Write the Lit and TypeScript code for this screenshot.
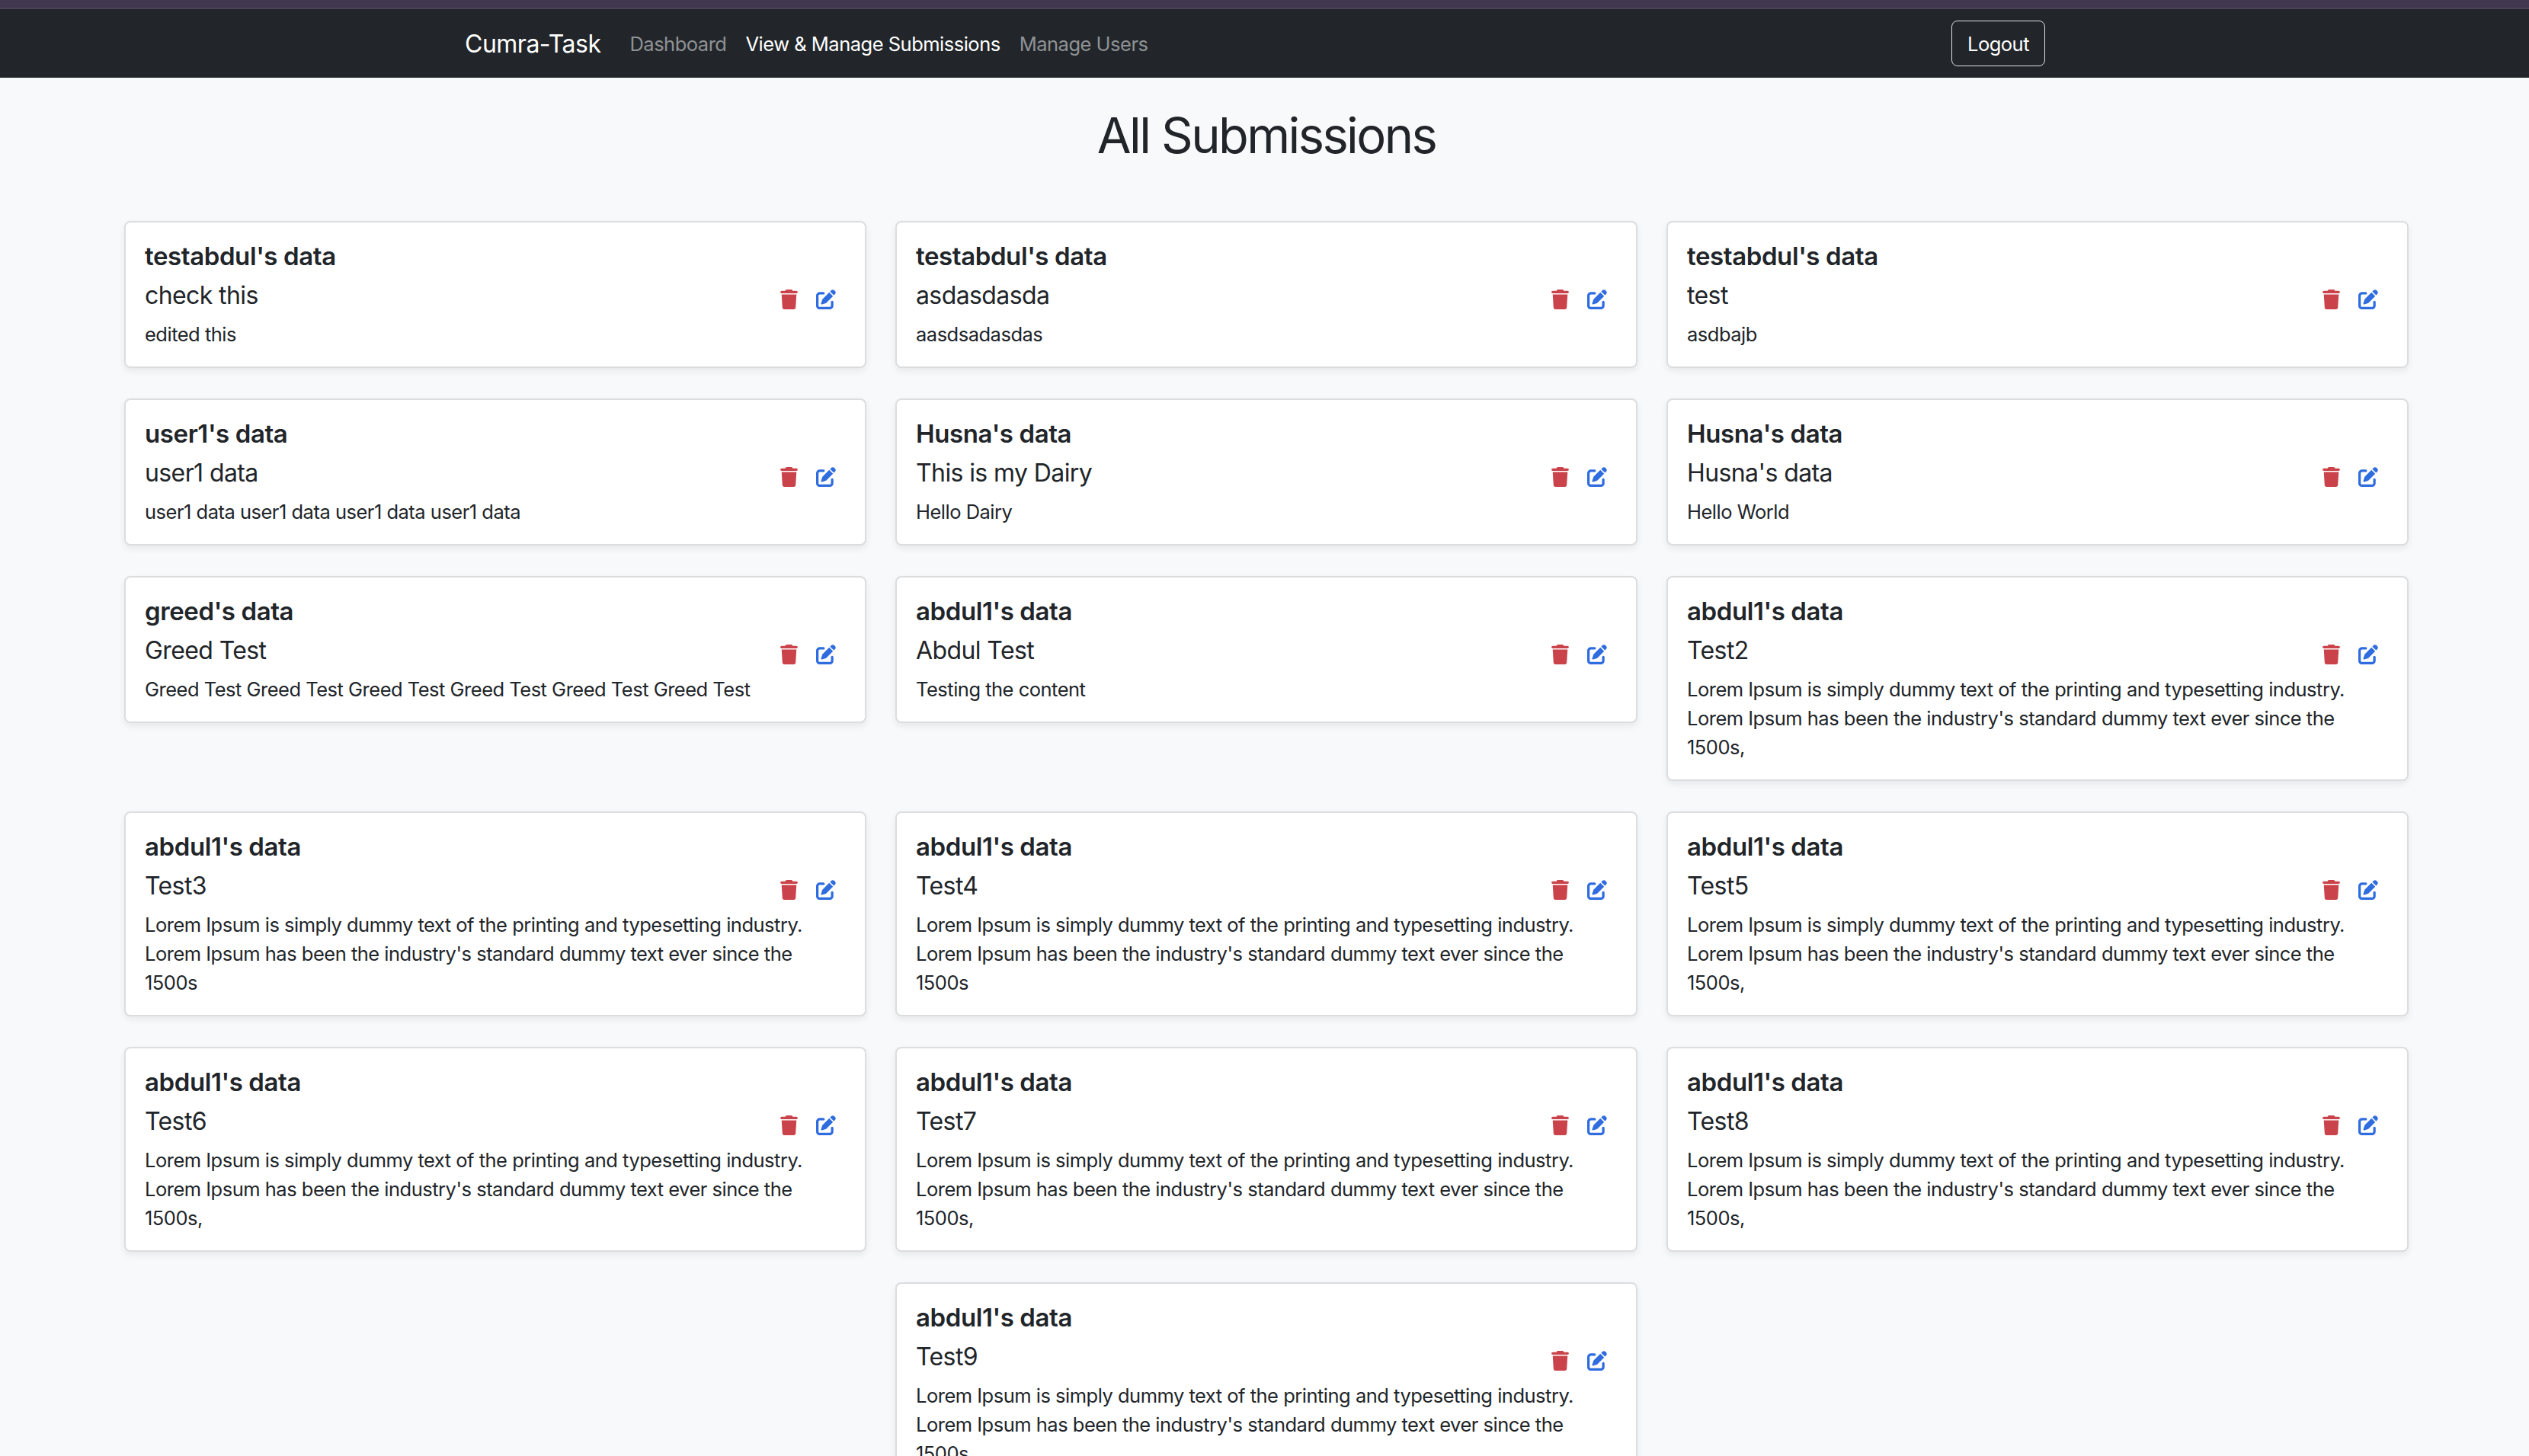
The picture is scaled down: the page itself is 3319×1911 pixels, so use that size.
import {LitElement, css, html} from 'lit'
import {customElement} from 'lit/decorators.js'

const lorem = "Lorem Ipsum is simply dummy text of the printing and typesetting industry. Lorem Ipsum has been the industry's standard dummy text ever since the 1500s"

const submissions = [
  {owner: 'testabdul', title: 'check this', text: 'edited this'},
  {owner: 'testabdul', title: 'asdasdasda', text: 'aasdsadasdas'},
  {owner: 'testabdul', title: 'test', text: 'asdbajb'},
  {owner: 'user1', title: 'user1 data', text: 'user1 data user1 data user1 data user1 data'},
  {owner: 'Husna', title: 'This is my Dairy', text: 'Hello Dairy'},
  {owner: 'Husna', title: "Husna's data", text: 'Hello World'},
  {owner: 'greed', title: 'Greed Test', text: 'Greed Test Greed Test Greed Test Greed Test Greed Test Greed Test'},
  {owner: 'abdul1', title: 'Abdul Test', text: 'Testing the content'},
  {owner: 'abdul1', title: 'Test2', text: lorem + ','},
  {owner: 'abdul1', title: 'Test3', text: lorem},
  {owner: 'abdul1', title: 'Test4', text: lorem},
  {owner: 'abdul1', title: 'Test5', text: lorem + ','},
  {owner: 'abdul1', title: 'Test6', text: lorem + ','},
  {owner: 'abdul1', title: 'Test7', text: lorem + ','},
  {owner: 'abdul1', title: 'Test8', text: lorem + ','},
  {owner: 'abdul1', title: 'Test9', text: lorem},
]

@customElement('app-root')
export class AppRoot extends LitElement {
  static styles = css`
    :host {
      display: block;
      height: 1911px;
      overflow: hidden;
      background: #f8f9fa;
      color: #212529;
      font-family: Inter, "Liberation Sans", sans-serif;
    }

    .strip {
      height: 10px;
      background: #41384f;
      border-bottom: 2px solid #4b4358;
    }

    .nav {
      display: flex;
      align-items: center;
      height: 90px;
      padding: 0 635px 0 610px;
      background: #22262a;
    }

    .brand {
      font-size: 32px;
      letter-spacing: -0.5px;
      color: #fff;
      margin-right: 38px;
    }

    .link {
      font-size: 25.5px;
      letter-spacing: -0.5px;
      color: #8f9295;
      margin-right: 25px;
    }

    .link.active {
      color: #fff;
    }

    .logout {
      margin-left: auto;
      width: 123px;
      height: 60px;
      box-sizing: border-box;
      border: 1.5px solid #e0e1e2;
      border-radius: 8px;
      background: none;
      color: #fff;
      font: inherit;
      font-size: 25.5px;
      letter-spacing: -0.5px;
      padding: 0;
    }

    h1 {
      margin: 0;
      padding: 36px 0 0 5px;
      height: 150px;
      box-sizing: border-box;
      text-align: center;
      font-size: 65px;
      line-height: 80px;
      letter-spacing: -2.6px;
      font-weight: 400;
    }

    .cards {
      display: flex;
      flex-wrap: wrap;
      justify-content: center;
      align-items: flex-start;
      gap: 40px 38px;
      padding: 38px 158px 0 163px;
    }

    .card {
      position: relative;
      box-sizing: border-box;
      width: 974px;
      padding: 24px 59px 23px 25px;
      background: #fff;
      border: 2px solid #dcdddf;
      border-radius: 8px;
      box-shadow: 0 4px 10px rgba(0, 0, 0, 0.07);
    }

    .owner {
      margin: 0;
      font-size: 33px;
      line-height: 40px;
      letter-spacing: -0.4px;
      font-weight: 600;
    }

    .title {
      margin: 12px 0 0;
      font-size: 32px;
      line-height: 40px;
      letter-spacing: -0.6px;
    }

    .text {
      margin: 12px 0 0;
      font-size: 25.5px;
      line-height: 38px;
      letter-spacing: -0.5px;
    }

    .actions {
      position: absolute;
      top: 88px;
      right: 38px;
      display: flex;
      gap: 24px;
    }

    .trash {
      width: 23px;
      height: 26px;
      fill: #cb434a;
    }

    .edit {
      width: 26px;
      height: 26px;
      fill: #2f6cdf;
    }
  `

  render() {
    return html`
      <div class="strip"></div>
      <nav class="nav">
        <span class="brand">Cumra-Task</span>
        <span class="link">Dashboard</span>
        <span class="link active">View &amp; Manage Submissions</span>
        <span class="link">Manage Users</span>
        <button class="logout">Logout</button>
      </nav>
      <h1>All Submissions</h1>
      <div class="cards">
        ${submissions.map(s => html`
          <div class="card">
            <p class="owner">${s.owner}'s data</p>
            <p class="title">${s.title}</p>
            <p class="text">${s.text}</p>
            <div class="actions">
              <svg class="trash" viewBox="0 0 448 512"><path d="M135.2 17.7L128 32H32C14.3 32 0 46.3 0 64S14.3 96 32 96H416c17.7 0 32-14.3 32-32s-14.3-32-32-32H320l-7.2-14.3C307.4 6.8 296.3 0 284.2 0H163.8c-12.1 0-23.2 6.8-28.6 17.7zM416 128H32L53.2 467c1.6 25.3 22.6 45 47.9 45H346.9c25.3 0 46.3-19.7 47.9-45L416 128z"/></svg>
              <svg class="edit" viewBox="0 0 512 512"><path d="M471.6 21.7c-21.9-21.9-57.3-21.9-79.2 0L362.3 51.7l97.9 97.9 30.1-30.1c21.9-21.9 21.9-57.3 0-79.2L471.6 21.7zm-299.2 220c-6.1 6.1-10.8 13.6-13.5 21.9l-29.6 88.8c-2.9 8.6-.6 18.1 5.8 24.6s15.9 8.7 24.6 5.8l88.8-29.6c8.2-2.7 15.7-7.4 21.9-13.5L437.7 172.3 339.7 74.3 172.4 241.7zM96 64C43 64 0 107 0 160V416c0 53 43 96 96 96H352c53 0 96-43 96-96V320c0-17.7-14.3-32-32-32s-32 14.3-32 32v96c0 17.7-14.3 32-32 32H96c-17.7 0-32-14.3-32-32V160c0-17.7 14.3-32 32-32h96c17.7 0 32-14.3 32-32s-14.3-32-32-32H96z"/></svg>
            </div>
          </div>
        `)}
      </div>
    `
  }
}
